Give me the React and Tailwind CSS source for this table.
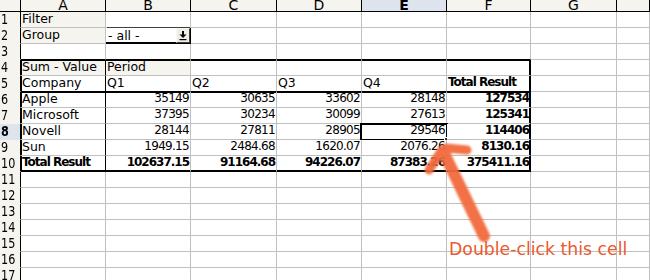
import React from 'react'

const COLS = ['A', 'B', 'C', 'D', 'E', 'F', 'G', '']

const DATA = {
  1: ['Filter'],
  2: ['Group', '- all -'],
  4: ['Sum - Value', 'Period'],
  5: ['Company', 'Q1', 'Q2', 'Q3', 'Q4', 'Total Result'],
  6: ['Apple', '35149', '30635', '33602', '28148', '127534'],
  7: ['Microsoft', '37395', '30234', '30099', '27613', '125341'],
  8: ['Novell', '28144', '27811', '28905', '29546', '114406'],
  9: ['Sun', '1949.15', '2484.68', '1620.07', '2076.26', '8130.16'],
  10: ['Total Result', '102637.15', '91164.68', '94226.07', '87383.26', '375411.16'],
}

// extra inner pixel for the thick pivot table frame
const SHADOWS = {
  t: 'shadow-[inset_0_1px_0_#000]',
  b: 'shadow-[inset_0_-1px_0_#000]',
  l: 'shadow-[inset_1px_0_0_#000]',
  r: 'shadow-[inset_-1px_0_0_#000]',
  tl: 'shadow-[inset_1px_1px_0_#000]',
  tr: 'shadow-[inset_-1px_1px_0_#000]',
  bl: 'shadow-[inset_1px_-1px_0_#000]',
  br: 'shadow-[inset_-1px_-1px_0_#000]',
}

const BEIGE = ['1-1', '2-1', '4-1', '4-2']

const cellEdges = (r, c) => {
  const inTable = r >= 4 && r <= 10 && c >= 1 && c <= 6
  const isCombo = r === 2 && c === 2
  const right = (inTable && (c === 1 || c === 6)) || isCombo ? 'border-r-black' : 'border-r-[#c0c0c0]'
  const bottom = ((r === 3 || r === 5 || r === 10) && c >= 1 && c <= 6) || isCombo ? 'border-b-black' : 'border-b-[#c0c0c0]'

  let key = ''
  if (inTable) {
    key = (r === 4 || r === 6 ? 't' : r === 10 ? 'b' : '') + (c === 1 ? 'l' : c === 6 ? 'r' : '')
  }
  if (isCombo) key = 'br'
  return `${right} ${bottom} ${SHADOWS[key] || ''}`
}

const DropButton = () => (
  <div className="w-[14px] h-[15px] shrink-0 bg-[#efede6] border-l border-t border-l-[#f8f8f8] border-t-[#f8f8f8] border-r border-b border-r-[#404040] border-b-[#404040]">
    <svg width="12" height="13" viewBox="0 0 12 13">
      <rect x="5" y="2" width="2" height="4" fill="#000" />
      <path d="M2.5 5.5 H9.5 L6 9 Z" fill="#000" />
      <rect x="2.5" y="10" width="7" height="1.2" fill="#000" />
    </svg>
  </div>
)

const Cell = ({ r, c }) => {
  const value = DATA[r]?.[c - 1]
  const numeric = value && /^[\d.]+$/.test(value)
  const bold = (r === 10 && c <= 6) || (c === 6 && r >= 5 && r <= 10)
  const beige = BEIGE.includes(`${r}-${c}`)
  const selected = r === 8 && c === 5

  let text = 'pl-[1px] text-[12.5px]'
  if (numeric) text = 'justify-end pr-[1px] text-[12px] ' + (bold ? 'tracking-[-1px]' : 'tracking-[-0.7px]')
  else if (bold) text = 'pl-[1px] text-[12px] tracking-[-1px]'

  return (
    <div
      className={`relative h-4 flex border-r border-b ${cellEdges(r, c)} ${beige ? 'bg-[#f6f4ee]' : 'bg-white'} ${text} ${bold ? 'font-bold' : ''} leading-[13px] whitespace-nowrap`}
    >
      {r === 2 && c === 2 ? (
        <div className="flex-1 flex justify-between border-t border-t-[#404040] -mt-px">
          <span className="pl-[1px] pt-[1px]">{value}</span>
          <DropButton />
        </div>
      ) : (
        <span>{value}</span>
      )}
      {selected && (
        <div className="absolute -left-[2px] -top-px -right-[2px] -bottom-[2px] border-2 border-black">
          <div className="absolute -right-[3px] -bottom-[3px] w-[5px] h-[5px] bg-[#303030] border border-white" />
        </div>
      )}
    </div>
  )
}

const RowHead = ({ r }) => (
  <div
    className={`h-4 border-r border-r-black border-b border-b-transparent pl-[1px] text-[14px] leading-[15px] overflow-hidden ${r === 8 ? 'bg-[#dde4ed] font-bold' : 'bg-[#f6f4ee]'}`}
  >
    <span className="inline-block origin-left scale-x-[0.8]">{r}</span>
  </div>
)

const Arrow = () => (
  <svg className="absolute left-0 top-0 pointer-events-none" width="650" height="280" viewBox="0 0 650 280">
    <defs>
      <filter id="soft" x="-30%" y="-30%" width="160%" height="160%">
        <feGaussianBlur stdDeviation="1.3" />
      </filter>
    </defs>
    <g stroke="#f26a3e" strokeLinecap="round" fill="none" filter="url(#soft)" opacity="0.95">
      <path d="M443 151 L484 236" strokeWidth="12" />
      <path d="M446 148 L467 150" strokeWidth="9" />
      <path d="M442 150 L429 170" strokeWidth="9" />
    </g>
  </svg>
)

export default function App() {
  const rows = Array.from({ length: 17 }, (_, i) => i + 1)

  return (
    <div className="relative w-[650px] h-[280px] overflow-hidden bg-white text-black font-['DejaVu_Sans',sans-serif]">
      <div className="grid grid-cols-[21px_85px_85px_86px_85px_85px_84px_86px_1fr]">
        {/* column headers */}
        <div className="h-[12px] bg-[#f6f4ee] border-r border-b border-black" />
        {COLS.map((col, i) => (
          <div
            key={i}
            className={`h-[12px] border-r border-b border-black text-center text-[14px] leading-[11px] overflow-hidden ${i === 4 ? 'bg-[#dde4ed] font-bold' : 'bg-[#f6f4ee]'}`}
          >
            {col}
          </div>
        ))}

        {rows.map((r) => (
          <React.Fragment key={r}>
            <RowHead r={r} />
            {COLS.map((_, i) => (
              <Cell key={i} r={r} c={i + 1} />
            ))}
          </React.Fragment>
        ))}
      </div>

      <Arrow />
      <div className="absolute left-[449px] top-[241px] text-[17.3px] leading-[17px] text-[#ea5a2e] whitespace-nowrap">
        Double-click this cell
      </div>
    </div>
  )
}
